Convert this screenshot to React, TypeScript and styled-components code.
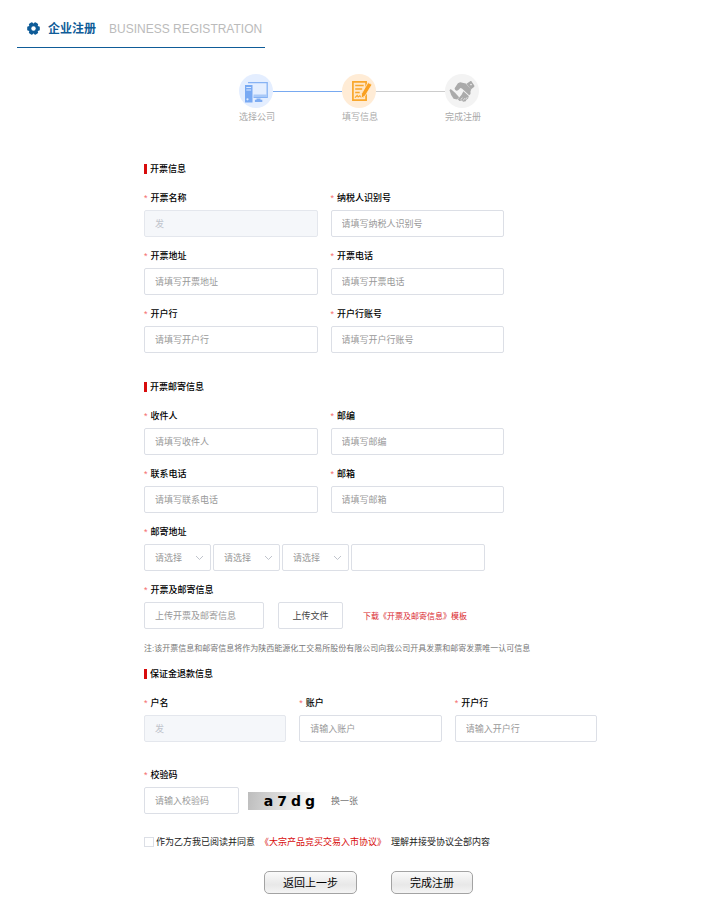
import React from "react";
import styled, { createGlobalStyle } from "styled-components";

const GlobalStyle = createGlobalStyle`
  *, *::before, *::after { box-sizing: border-box; }
  body { margin: 0; background: #fff; }
  body, input, select, button {
    font-family: "Liberation Sans", "Noto Sans CJK SC", sans-serif;
  }
`;

const Page = styled.div`
  padding: 0 17px 16px;
  color: #000;
  font-size: 9px;
`;

const Header = styled.header`
  display: inline-flex;
  align-items: center;
  height: 48px;
  padding: 10px 3px 0 10px;
  border-bottom: 1px solid #0f5c98;
`;

const HeaderTitle = styled.h1`
  margin: 0 13px 0 8px;
  font-size: 12px;
  line-height: 18px;
  font-weight: 700;
  color: #0f5c98;
`;

const HeaderSubtitle = styled.span`
  font-size: 12px;
  line-height: 18px;
  color: #bbb;
`;

const Steps = styled.ol`
  display: flex;
  justify-content: center;
  margin: 26px 0 0;
  padding: 0;
  list-style: none;
`;

const Step = styled.li`
  width: 34px;
  white-space: nowrap;
  line-height: 18px;
  color: #aaa;
`;

const StepCircle = styled.div<{ $bg: string }>`
  display: grid;
  place-items: center;
  width: 34px;
  height: 34px;
  border-radius: 50%;
  background: ${(p) => p.$bg};
`;

const StepLine = styled.li<{ $color: string }>`
  width: 69px;
  height: 1px;
  margin-top: 17px;
  background: ${(p) => p.$color};
`;

const Form = styled.form`
  margin: 38px 104px 0 127px;
`;

const SectionTitle = styled.h2<{ $gap: number }>`
  height: 10px;
  margin: ${(p) => p.$gap}px 0 12px;
  padding-left: 3px;
  border-left: 3px solid #d80c0c;
  font-size: 9px;
  line-height: 10px;
  font-weight: 500;
`;

const Fields = styled.div<{ $columns: number }>`
  display: grid;
  grid-template-columns: repeat(${(p) => p.$columns}, 1fr);
  gap: 7px 13px;
  max-width: ${(p) => (p.$columns === 2 ? "360px" : "none")};
`;

const FieldBox = styled.div`
  display: flex;
  flex-direction: column;
  min-width: 0;
`;

const Block = styled(FieldBox)<{ $gap: number }>`
  margin-top: ${(p) => p.$gap}px;
`;

const Label = styled.label`
  line-height: 24px;
  font-weight: 500;

  &::before {
    content: "*";
    margin-right: 3px;
    color: #f56c6c;
  }
`;

const TextInput = styled.input`
  width: 100%;
  min-width: 0;
  height: 27px;
  padding: 0 10px;
  border: 1px solid #dcdfe6;
  border-radius: 2px;
  background: #fff;
  font-size: 9px;
  color: #606266;
  outline: none;

  &::placeholder { color: #999; opacity: 1; }
  &:focus { border-color: #409eff; }
  &:disabled {
    background: #f5f7fa;
    border-color: #e4e7ed;
    color: #c0c4cc;
  }
`;

const AddressRow = styled.div`
  display: grid;
  grid-template-columns: 1fr 1fr 1fr 2fr;
  gap: 2px;
  max-width: 341px;
`;

const SelectBox = styled.div`
  display: grid;
  align-items: center;

  & > * { grid-area: 1 / 1; }
  & > svg { justify-self: end; margin-right: 7px; pointer-events: none; }
`;

const Select = styled.select`
  width: 100%;
  height: 27px;
  padding: 0 20px 0 10px;
  appearance: none;
  border: 1px solid #dcdfe6;
  border-radius: 2px;
  background: #fff;
  font-size: 9px;
  color: #999;
`;

const Row = styled.div`
  display: flex;
  align-items: center;
`;

const UploadInput = styled(TextInput)`
  width: 120px;
`;

const UploadButton = styled.button`
  width: 65px;
  height: 27px;
  margin: 0 20px 0 14px;
  padding: 0;
  border: 1px solid #dcdfe6;
  border-radius: 2px;
  background: #fff;
  font-size: 9px;
  color: #444;
  cursor: pointer;
`;

const TemplateLink = styled.a`
  font-size: 8px;
  color: #d9262c;
  text-decoration: none;
`;

const Note = styled.p`
  margin: 12px 0 0;
  font-size: 8px;
  line-height: 16px;
  color: #777;
`;

const CodeInput = styled(TextInput)`
  width: 95px;
`;

const Captcha = styled.div`
  display: flex;
  justify-content: flex-end;
  align-items: center;
  gap: 4px;
  width: 67px;
  height: 18px;
  margin: 0 16px 0 9px;
  background: linear-gradient(100deg, #bdbdbd, #fff);
  font: 700 14px/18px "DejaVu Sans", sans-serif;
  color: #000;
`;

const RefreshButton = styled.button`
  padding: 0;
  border: 0;
  background: none;
  font-size: 9px;
  color: #777;
  cursor: pointer;
`;

const Agreement = styled.div`
  display: flex;
  align-items: center;
  gap: 5px;
  margin-top: 19px;
  line-height: 18px;
  color: #222;
`;

const AgreeLabel = styled.label`
  display: flex;
  align-items: center;
  gap: 2px;
`;

const Checkbox = styled.input`
  width: 10px;
  height: 10px;
  margin: 0;
  appearance: none;
  border: 1px solid #dcdfe6;
  background: #fff;

  &:checked { background: #409eff; }
`;

const AgreementLink = styled.a`
  color: #d80c0c;
  text-decoration: none;
`;

const Actions = styled.div`
  display: flex;
  justify-content: center;
  gap: 34px;
  margin-top: 20px;
  padding-right: 4px;
`;

const ActionButton = styled.button`
  height: 23px;
  padding: 0 18px;
  border: 1px solid #a3a3a3;
  border-radius: 5px;
  background: linear-gradient(#fafafa, #e8e8e8 60%, #f4f4f4);
  font-size: 11px;
  line-height: 20px;
  color: #000;
  cursor: pointer;
`;

const GearIcon = () => (
  <svg width="13" height="13" viewBox="0 0 13 13" aria-hidden="true">
    <g fill="#0f5c98">
      {[0, 60, 120].map((a) => (
        <rect key={a} x="0.2" y="4.3" width="12.6" height="4.4" rx="1.3" transform={`rotate(${a} 6.5 6.5)`} />
      ))}
      <circle cx="6.5" cy="6.5" r="5" />
    </g>
    <circle cx="6.5" cy="6.5" r="2.2" fill="#fff" />
  </svg>
);

const ComputerIcon = () => (
  <svg width="34" height="34" viewBox="0 0 34 34" aria-hidden="true">
    <path d="M9 8.7h19.2v14.6H14.5" fill="none" stroke="#86b2f4" strokeWidth="1.3" />
    <path d="M14.5 20.5h13.4v2.5H14.5z" fill="#a9c9f8" />
    <path d="M17.5 24.5h4v1.3h1.8V28h-7.4v-2.2h1.6z" fill="#7eacf2" />
    <path d="M6 11h7.5v17.5H6z" fill="#78a9f3" />
    <path d="M7.3 13.5h4.8M7.3 16h4.8" stroke="#dceaff" strokeWidth="1.1" />
    <circle cx="8.5" cy="25.3" r="1.1" fill="#dceaff" />
  </svg>
);

const FormIcon = () => (
  <svg width="34" height="34" viewBox="0 0 34 34" aria-hidden="true">
    <path d="M10.9 7.9h13.2v18.2H10.9z" fill="#ffe7c8" stroke="#f9a72b" strokeWidth="1.7" />
    <path d="M13.2 11.5h8.5M13.2 15h7M13.2 18.4h4.5" stroke="#f9a72b" strokeWidth="1.5" />
    <path d="M13 23.7l2.2-2.2 1 1.5 1.6-1.2 1 1.2h3" fill="none" stroke="#f9a72b" strokeWidth="1.2" />
    <path d="M26 8.6l4 2-6.8 11.2-4 2.6.4-4.8z" fill="#f9a021" stroke="#ffecd4" strokeWidth=".8" />
  </svg>
);

const HandshakeIcon = () => (
  <svg width="34" height="34" viewBox="0 0 34 34" aria-hidden="true">
    <g fill="#aaa">
      <path d="M21.5 9.8l3.7-2.6c.5-.4 1-.3 1.4.2l2.7 4.1c.3.5.2 1-.3 1.4l-3.2 2.5z" />
      <path d="M20.8 9.5l-5.6-1.2-2.3 1-3.3 5c.3 2.3 2 3.2 3.8 1.8l2-2 1.5.3 7.3 6.8 1.3-1.1V17l.8-1.3z" />
      <path d="M4.5 16.2l1.2-1.1 4.4 3.7 4 4.5-2 2.2-3.5-.8L6.2 21z" />
      <path d="M12.8 25.2l3.8-4.5 1.8-3.4 5.4 4.7-.7 2.5-1.7 1.3-.7 1.5-2.6.4-1.2-1.3-2.5.5z" />
    </g>
    <path d="M15.8 25.7l1.6-2M18.2 26.4l1.7-2.2M20.6 25.3l1.6-2M16.5 16.3l-3.2 4.3" stroke="#f3f3f3" strokeWidth=".8" />
    <circle cx="26" cy="10.6" r=".8" fill="#f3f3f3" />
  </svg>
);

const Chevron = () => (
  <svg width="9" height="6" viewBox="0 0 9 6" aria-hidden="true">
    <path d="M1 1l3.5 3.5L8 1" fill="none" stroke="#c0c4cc" />
  </svg>
);

type FieldProps = { id: string; label: string; placeholder?: string; value?: string };

const Field = ({ id, label, placeholder, value }: FieldProps) => (
  <FieldBox>
    <Label htmlFor={id}>{label}</Label>
    <TextInput id={id} placeholder={placeholder} defaultValue={value} disabled={value !== undefined} />
  </FieldBox>
);

const regions = ["省", "市", "区"];

export default function App() {
  return (
    <>
      <GlobalStyle />
      <Page>
        <Header>
          <GearIcon />
          <HeaderTitle>企业注册</HeaderTitle>
          <HeaderSubtitle>BUSINESS REGISTRATION</HeaderSubtitle>
        </Header>

        <Steps>
          <Step>
            <StepCircle $bg="#e4eeff"><ComputerIcon /></StepCircle>
            选择公司
          </Step>
          <StepLine $color="#78a9f0" />
          <Step>
            <StepCircle $bg="#ffecd6"><FormIcon /></StepCircle>
            填写信息
          </Step>
          <StepLine $color="#ccc" />
          <Step>
            <StepCircle $bg="#f3f3f3"><HandshakeIcon /></StepCircle>
            完成注册
          </Step>
        </Steps>

        <Form onSubmit={(e) => e.preventDefault()}>
          <SectionTitle $gap={0}>开票信息</SectionTitle>
          <Fields $columns={2}>
            <Field id="name" label="开票名称" value="发" />
            <Field id="tax" label="纳税人识别号" placeholder="请填写纳税人识别号" />
            <Field id="addr" label="开票地址" placeholder="请填写开票地址" />
            <Field id="phone" label="开票电话" placeholder="请填写开票电话" />
            <Field id="bank" label="开户行" placeholder="请填写开户行" />
            <Field id="account" label="开户行账号" placeholder="请填写开户行账号" />
          </Fields>

          <SectionTitle $gap={29}>开票邮寄信息</SectionTitle>
          <Fields $columns={2}>
            <Field id="receiver" label="收件人" placeholder="请填写收件人" />
            <Field id="zip" label="邮编" placeholder="请填写邮编" />
            <Field id="tel" label="联系电话" placeholder="请填写联系电话" />
            <Field id="mail" label="邮箱" placeholder="请填写邮箱" />
          </Fields>
          <Block $gap={7}>
            <Label htmlFor="street">邮寄地址</Label>
            <AddressRow>
              {regions.map((r) => (
                <SelectBox key={r}>
                  <Select aria-label={r}>
                    <option>请选择</option>
                  </Select>
                  <Chevron />
                </SelectBox>
              ))}
              <TextInput id="street" />
            </AddressRow>
          </Block>
          <Block $gap={7}>
            <Label htmlFor="upload">开票及邮寄信息</Label>
            <Row>
              <UploadInput id="upload" placeholder="上传开票及邮寄信息" />
              <UploadButton type="button">上传文件</UploadButton>
              <TemplateLink href="#template">下载《开票及邮寄信息》模板</TemplateLink>
            </Row>
          </Block>
          <Note>注:该开票信息和邮寄信息将作为陕西能源化工交易所股份有限公司向我公司开具发票和邮寄发票唯一认可信息</Note>

          <SectionTitle $gap={12}>保证金退款信息</SectionTitle>
          <Fields $columns={3}>
            <Field id="holder" label="户名" value="发" />
            <Field id="refundAccount" label="账户" placeholder="请输入账户" />
            <Field id="refundBank" label="开户行" placeholder="请输入开户行" />
          </Fields>

          <Block $gap={21}>
            <Label htmlFor="code">校验码</Label>
            <Row>
              <CodeInput id="code" placeholder="请输入校验码" />
              <Captcha>
                {["a", "7", "d", "g"].map((c) => (
                  <span key={c}>{c}</span>
                ))}
              </Captcha>
              <RefreshButton type="button">换一张</RefreshButton>
            </Row>
          </Block>

          <Agreement>
            <AgreeLabel>
              <Checkbox type="checkbox" />
              作为乙方我已阅读并同意
            </AgreeLabel>
            <AgreementLink href="#agreement">《大宗产品竞买交易入市协议》</AgreementLink>
            <span>理解并接受协议全部内容</span>
          </Agreement>

          <Actions>
            <ActionButton type="button">返回上一步</ActionButton>
            <ActionButton type="submit">完成注册</ActionButton>
          </Actions>
        </Form>
      </Page>
    </>
  );
}
